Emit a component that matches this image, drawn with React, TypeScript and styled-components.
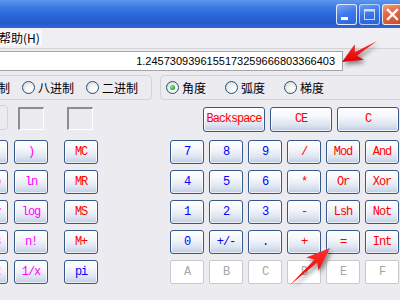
import styled, { createGlobalStyle } from 'styled-components';

const GlobalStyle = createGlobalStyle`
  html, body {
    margin: 0;
    padding: 0;
    width: 400px;
    height: 300px;
    overflow: hidden;
    background: #ecebf0;
  }
`;

const Window = styled.div`
  margin-left: -100px;
  width: 504px;
  height: 300px;
  background: #ecebf0;
  display: flex;
  flex-direction: column;
  font-family: "Liberation Sans", "Noto Sans CJK SC", sans-serif;
`;

const TitleBar = styled.div`
  height: 28px;
  flex: none;
  display: flex;
  align-items: center;
  justify-content: flex-end;
  gap: 2px;
  padding-right: 1px;
  background: linear-gradient(180deg, #5e97ee 0%, #3f7ee6 22%, #2d69dc 50%, #2459cc 82%, #3366d2 100%);
`;

const CaptionButton = styled.div<{ $kind: 'min' | 'max' | 'close' }>`
  width: 21px;
  height: 21px;
  box-sizing: border-box;
  border: 1px solid rgba(255, 255, 255, 0.85);
  border-radius: 3px;
  display: flex;
  align-items: center;
  justify-content: center;
  background: ${p =>
    p.$kind === 'close'
      ? 'linear-gradient(160deg, #f0a080 0%, #e06a44 40%, #cf4a26 100%)'
      : 'linear-gradient(160deg, #7aa8f5 0%, #3f7cec 45%, #2a63e0 100%)'};
  opacity: ${p => (p.$kind === 'max' ? 0.75 : 1)};
`;

const MenuBar = styled.div`
  height: 20px;
  flex: none;
  display: flex;
  align-items: center;
  padding-left: 97px;
  background: #efeef2;
  border-bottom: 1px solid #d4d3d8;
`;

const MenuItem = styled.span`
  font-family: "Noto Sans CJK SC", sans-serif;
  font-size: 12px;
  line-height: 16px;
  padding: 0 2px;
  background: #f8f8fa;
  color: #000;
`;

const DisplayRow = styled.div`
  display: flex;
  padding: 2px 61px 0 20px;
`;

const Display = styled.div`
  flex: 1;
  height: 20px;
  box-sizing: border-box;
  border: 1px solid #a3a3a8;
  background: #fff;
  display: flex;
  align-items: center;
  justify-content: flex-end;
  padding-right: 7px;
  font-size: 11px;
  color: #000;
`;

const RadioRow = styled.div`
  display: flex;
  gap: 8px;
  margin-top: 4px;
  height: 25px;
  padding-left: 10px;
`;

const GroupBox = styled.div<{ $width?: number; $align?: 'start' | 'end' }>`
  box-sizing: border-box;
  border: 1px solid #d3d2d6;
  border-radius: 4px;
  display: flex;
  align-items: center;
  overflow: hidden;
  ${p => (p.$width ? `width: ${p.$width}px; flex: none;` : 'flex: 1;')}
  justify-content: ${p => (p.$align === 'end' ? 'flex-end' : 'flex-start')};
  padding: ${p => (p.$align === 'end' ? '0 13px 0 0' : '0 0 0 5px')};
`;

const RadioItem = styled.label<{ $gap: number }>`
  display: flex;
  flex: none;
  align-items: center;
  gap: 3px;
  white-space: nowrap;
  margin-right: ${p => p.$gap}px;
  &:last-child { margin-right: 0; }
  font-family: "Noto Sans CJK SC", sans-serif;
  font-size: 12px;
  color: #000;
`;

const RadioDot = styled.span<{ $checked?: boolean }>`
  width: 13px;
  height: 13px;
  flex: none;
  box-sizing: border-box;
  border-radius: 50%;
  border: 1px solid #1c5180;
  background: radial-gradient(circle at 70% 70%, #ffffff 0%, #f2f2ee 45%, #d2d2cc 100%);
  display: flex;
  align-items: center;
  justify-content: center;
  &::after {
    content: '';
    width: 5px;
    height: 5px;
    border-radius: 50%;
    background: ${p => (p.$checked ? 'radial-gradient(circle at 35% 35%, #9be69b, #22a322 70%)' : 'transparent')};
  }
`;

const ControlRow = styled.div`
  display: flex;
  align-items: center;
  margin-top: 5px;
  height: 26px;
  padding-left: 18px;
`;

const SmallGroup = styled.div`
  width: 90px;
  height: 25px;
  box-sizing: border-box;
  border: 1px solid #d3d2d6;
  border-radius: 4px;
  flex: none;
  align-self: flex-start;
`;

const Indicator = styled.div<{ $left: number }>`
  width: 26px;
  height: 23px;
  box-sizing: border-box;
  margin-left: ${p => p.$left}px;
  border-style: solid;
  border-width: 2px 1px 1px 2px;
  border-color: #8e8e8e #ffffff #ffffff #8e8e8e;
  flex: none;
`;

const EditButtons = styled.div`
  margin-left: auto;
  margin-right: 5px;
  display: flex;
  gap: 5px;
  margin-top: 2px;
`;

const Keys = styled.div`
  display: flex;
  margin-top: 9px;
  padding-left: 74px;
`;

const KeyGrid = styled.div<{ $cols: number; $gap: number; $after: number }>`
  display: grid;
  grid-template-columns: repeat(${p => p.$cols}, 34px);
  grid-auto-rows: 24px;
  column-gap: ${p => p.$gap}px;
  row-gap: 6px;
  margin-right: ${p => p.$after}px;
`;

type Tone = 'red' | 'blue' | 'pink' | 'off';

const toneColor: Record<Tone, string> = {
  red: '#ff0000',
  blue: '#0000ff',
  pink: '#ff00ff',
  off: '#a6a6a6',
};

const Key = styled.div<{ $tone: Tone; $width?: number }>`
  width: ${p => p.$width ?? 34}px;
  height: ${p => (p.$width ? 25 : 24)}px;
  box-sizing: border-box;
  display: flex;
  align-items: center;
  justify-content: center;
  font-family: "Liberation Mono", "DejaVu Sans Mono", monospace;
  font-size: 12px;
  letter-spacing: -1.1px;
  color: ${p => toneColor[p.$tone]};
  white-space: nowrap;
  ${p =>
    p.$tone === 'off'
      ? `
    border: 1px solid #cacaca;
    border-radius: 2px;
    background: #ffffff;
  `
      : `
    border: 1px solid #36578a;
    border-radius: 3px;
    background: linear-gradient(180deg, #ffffff 0%, #f5f7fb 35%, #dfe6f1 70%, #bfcde3 100%);
    box-shadow: inset 0 0 0 1px rgba(255, 255, 255, 0.7);
  `}
`;

const Overlay = styled.svg`
  position: fixed;
  left: 0;
  top: 0;
  width: 400px;
  height: 300px;
  pointer-events: none;
  filter: drop-shadow(2px 3px 2px rgba(0, 0, 0, 0.45));
`;

type K = [string, Tone];

const sciKeys: K[] = [
  ['(', 'pink'], [')', 'pink'],
  ['Exp', 'pink'], ['ln', 'pink'],
  ['x^y', 'pink'], ['log', 'pink'],
  ['x^3', 'pink'], ['n!', 'pink'],
  ['x^2', 'pink'], ['1/x', 'pink'],
];

const memKeys: K[] = [
  ['MC', 'red'], ['MR', 'red'], ['MS', 'red'], ['M+', 'red'], ['pi', 'blue'],
];

const mainKeys: K[] = [
  ['7', 'blue'], ['8', 'blue'], ['9', 'blue'], ['/', 'red'], ['Mod', 'red'], ['And', 'red'],
  ['4', 'blue'], ['5', 'blue'], ['6', 'blue'], ['*', 'red'], ['Or', 'red'], ['Xor', 'red'],
  ['1', 'blue'], ['2', 'blue'], ['3', 'blue'], ['-', 'red'], ['Lsh', 'red'], ['Not', 'red'],
  ['0', 'blue'], ['+/-', 'blue'], ['.', 'blue'], ['+', 'red'], ['=', 'red'], ['Int', 'red'],
  ['A', 'off'], ['B', 'off'], ['C', 'off'], ['D', 'off'], ['E', 'off'], ['F', 'off'],
];

function Radio({ label, checked, gap }: { label: string; checked?: boolean; gap: number }) {
  return (
    <RadioItem $gap={gap}>
      <RadioDot $checked={checked} />
      {label}
    </RadioItem>
  );
}

export default function App() {
  return (
    <>
      <GlobalStyle />
      <Window>
        <TitleBar>
          <CaptionButton $kind="min">
            <svg width="19" height="19" viewBox="0 0 19 19">
              <rect x="4" y="12" width="7" height="3" fill="#fff" />
            </svg>
          </CaptionButton>
          <CaptionButton $kind="max">
            <svg width="19" height="19" viewBox="0 0 19 19">
              <rect x="4.5" y="4.5" width="10" height="10" fill="none" stroke="#fff" strokeWidth="1" />
              <rect x="4" y="4" width="11" height="2.5" fill="#fff" />
            </svg>
          </CaptionButton>
          <CaptionButton $kind="close">
            <svg width="19" height="19" viewBox="0 0 19 19">
              <path d="M5 5 L14 14 M14 5 L5 14" stroke="#fff" strokeWidth="2.4" strokeLinecap="square" />
            </svg>
          </CaptionButton>
        </TitleBar>

        <MenuBar>
          <MenuItem>帮助(H)</MenuItem>
        </MenuBar>

        <DisplayRow>
          <Display>1.2457309396155173259666803366403</Display>
        </DisplayRow>

        <RadioRow>
          <GroupBox $width={242} $align="end">
            <Radio label="十六进制" gap={12} />
            <Radio label="十进制" gap={12} />
            <Radio label="八进制" gap={12} />
            <Radio label="二进制" gap={12} />
          </GroupBox>
          <GroupBox>
            <Radio label="角度" checked gap={19} />
            <Radio label="弧度" gap={19} />
            <Radio label="梯度" gap={19} />
          </GroupBox>
        </RadioRow>

        <ControlRow>
          <SmallGroup />
          <Indicator $left={10} />
          <Indicator $left={23} />
          <EditButtons>
            <Key $tone="red" $width={62}>Backspace</Key>
            <Key $tone="red" $width={62}>CE</Key>
            <Key $tone="red" $width={62}>C</Key>
          </EditButtons>
        </ControlRow>

        <Keys>
          <KeyGrid $cols={2} $gap={6} $after={16}>
            {sciKeys.map(([t, c], i) => (
              <Key key={i} $tone={c}>{t}</Key>
            ))}
          </KeyGrid>
          <KeyGrid $cols={1} $gap={0} $after={72}>
            {memKeys.map(([t, c], i) => (
              <Key key={i} $tone={c}>{t}</Key>
            ))}
          </KeyGrid>
          <KeyGrid $cols={6} $gap={5} $after={0}>
            {mainKeys.map(([t, c], i) => (
              <Key key={i} $tone={c}>{t}</Key>
            ))}
          </KeyGrid>
        </Keys>
      </Window>

      <Overlay viewBox="0 0 400 300">
        <defs>
          <linearGradient id="arrowRed" x1="0" y1="0" x2="0" y2="1">
            <stop offset="0" stopColor="#ff3030" />
            <stop offset="1" stopColor="#e00000" />
          </linearGradient>
        </defs>
        <polygon
          points="342,62 354.8,44.2 354.9,52.3 377,41 356.9,55.7 363.8,59.8"
          fill="url(#arrowRed)"
        />
        <polygon
          points="330,248 306.3,257.6 314.6,259.4 290,285 317.4,262.4 318.5,270.8"
          fill="url(#arrowRed)"
        />
      </Overlay>
    </>
  );
}
